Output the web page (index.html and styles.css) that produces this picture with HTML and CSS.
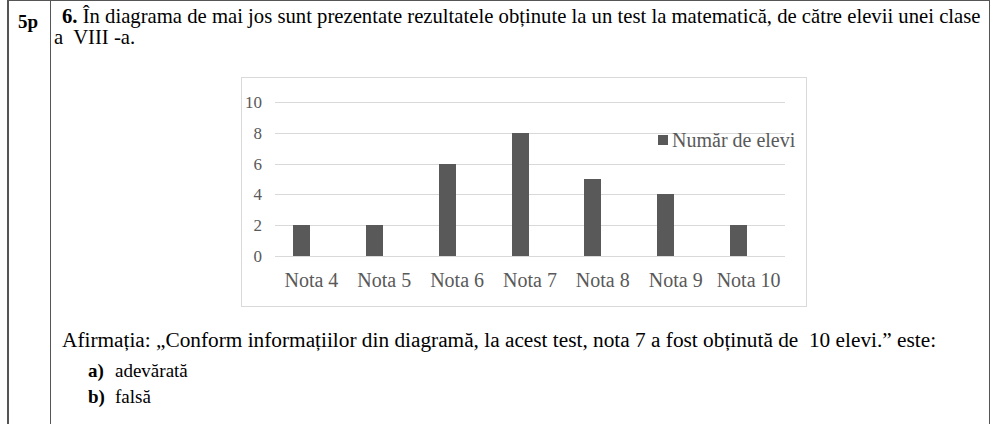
FILE: index.html
```html
<!DOCTYPE html>
<html lang="ro">
<head>
<meta charset="utf-8">
<title>Item 6</title>
<link rel="stylesheet" href="styles.css">
</head>
<body>
<div class="item">
  <div class="score">5p</div>
  <div class="content">
    <p class="question"><b>6.</b> În diagrama de mai jos sunt prezentate rezultatele obținute la un test la matematică, de către elevii unei clase a&nbsp; VIII -a.</p>
    <div class="chart">
      <svg width="566" height="230" viewBox="0 0 566 230" xmlns="http://www.w3.org/2000/svg">
        <rect x="0.5" y="0.5" width="565" height="229" fill="#fff" stroke="#d9d9d9"/>
        <g stroke="#d9d9d9" stroke-width="1">
          <line x1="34" y1="25.5" x2="544" y2="25.5"/>
          <line x1="34" y1="56.5" x2="544" y2="56.5"/>
          <line x1="34" y1="87.5" x2="544" y2="87.5"/>
          <line x1="34" y1="117.5" x2="544" y2="117.5"/>
          <line x1="34" y1="148.5" x2="544" y2="148.5"/>
          <line x1="34" y1="179.5" x2="544" y2="179.5"/>
        </g>
        <g fill="#595959">
          <rect x="52" y="148" width="17" height="31"/>
          <rect x="125" y="148" width="17" height="31"/>
          <rect x="198" y="87" width="17" height="92"/>
          <rect x="271" y="56" width="17" height="123"/>
          <rect x="343" y="102" width="17" height="77"/>
          <rect x="416" y="117" width="17" height="62"/>
          <rect x="489" y="148" width="17" height="31"/>
        </g>
        <g class="ylab" text-anchor="end">
          <text x="21" y="31">10</text>
          <text x="21" y="62">8</text>
          <text x="21" y="93">6</text>
          <text x="21" y="123">4</text>
          <text x="21" y="154">2</text>
          <text x="21" y="185">0</text>
        </g>
        <g class="xlab" text-anchor="middle">
          <text x="70.4" y="210">Nota 4</text>
          <text x="143.3" y="210">Nota 5</text>
          <text x="216.1" y="210">Nota 6</text>
          <text x="289" y="210">Nota 7</text>
          <text x="361.8" y="210">Nota 8</text>
          <text x="434.7" y="210">Nota 9</text>
          <text x="507.6" y="210">Nota 10</text>
        </g>
        <rect x="417" y="58" width="10" height="10" fill="#595959"/>
        <text class="legend" x="431" y="70">Număr de elevi</text>
      </svg>
    </div>
    <p class="statement">Afirmația: „Conform informațiilor din diagramă, la acest test, nota 7 a fost obținută de&nbsp; 10 elevi.” este:</p>
    <ul class="options">
      <li><b class="mark">a)</b><span>adevărată</span></li>
      <li><b class="mark">b)</b><span>falsă</span></li>
    </ul>
  </div>
</div>
</body>
</html>
```

FILE: styles.css
```css
html, body {
  margin: 0;
  padding: 0;
  background: #fff;
}
body {
  font-family: "Liberation Serif", "Times New Roman", serif;
  color: #000;
}
.item {
  margin-left: 7px;
  width: 980px;
  height: 430px;
  display: grid;
  grid-template-columns: 42px 1fr;
  border-left: 2px solid #555;
  border-top: 1px solid #555;
  border-right: 1px solid #555;
}
.score {
  border-right: 1px solid #555;
  font-weight: bold;
  font-size: 19px;
  line-height: 21px;
  padding: 10px 0 0 9px;
}
.content {
  padding: 5px 0 0 3px;
}
.question {
  margin: 0;
  font-size: 20.7px;
  line-height: 21px;
  text-indent: 8px;
}
.chart {
  margin: 29px 0 0 187px;
  width: 566px;
  height: 230px;
}
.chart svg {
  display: block;
}
.ylab text {
  font-family: "Liberation Serif", serif;
  font-size: 17px;
  fill: #595959;
}
.xlab text, .legend {
  font-family: "Liberation Serif", serif;
  font-size: 20px;
  fill: #595959;
}
.statement {
  margin: 23px 0 0 8px;
  font-size: 21.3px;
  line-height: 21px;
}
.options {
  list-style: none;
  margin: 7px 0 0 34px;
  padding: 0;
  font-size: 19px;
}
.options li {
  display: flex;
  line-height: 26px;
}
.options .mark {
  width: 27px;
  flex: none;
}
```
